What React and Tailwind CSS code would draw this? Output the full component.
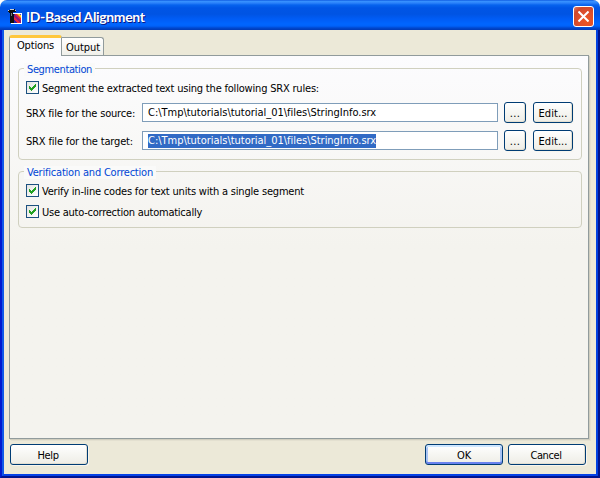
import React from "react";

function Check({ label, spacing, className = "" }) {
  return (
    <label className={`flex h-[13px] items-center ${className}`}>
      <span className="flex size-[13px] shrink-0 items-center justify-center border border-[#1c5180] bg-gradient-to-br from-[#e4e4e0] to-white">
        <svg width="7" height="7" viewBox="0 0 7 7" fill="#21a121" shapeRendering="crispEdges">
          <path d="M0 2h1v1h1v1h1v-1h1v-1h1v-1h1v-1h1v3h-1v1h-1v1h-1v1h-1v1h-1v-1h-1v-1h-1z" />
        </svg>
      </span>
      <span className={`ml-[3px] pt-[2px] whitespace-nowrap ${spacing}`}>{label}</span>
    </label>
  );
}

function Button({ children, className = "", spacing = "", primary = false }) {
  const face = primary
    ? "shadow-[inset_0_2px_0_#cee7ff,inset_0_-2px_0_#6982ee,inset_2px_0_0_#a9c4f3,inset_-2px_0_0_#a9c4f3]"
    : "shadow-[inset_-1px_-1px_0_#e2dfd2,1px_1px_0_#f7f5ee]";
  return (
    <button
      className={`flex h-[21px] items-center justify-center whitespace-nowrap rounded-[3px] border border-[#003c74] bg-gradient-to-b from-white via-[#f6f6f2] to-[#eeede6] pt-[2px] ${face} ${className}`}
    >
      <span className={spacing}>{children}</span>
    </button>
  );
}

function Group({ title, spacing, className = "", children }) {
  return (
    <fieldset className={`relative rounded-[4px] border border-[#d0d0bf] ${className}`}>
      <span className={`absolute -top-[6px] left-[5px] h-[13px] bg-[#fafaf9] px-[3px] leading-[13px] whitespace-nowrap text-[#0046d5] ${spacing}`}>
        {title}
      </span>
      {children}
    </fieldset>
  );
}

function FileRow({ label, spacing, selected = false, className = "" }) {
  return (
    <div className={`flex h-[21px] items-center ${className}`}>
      <span className={`w-[116px] shrink-0 pt-[2px] whitespace-nowrap ${spacing}`}>{label}</span>
      <div className="flex h-[19px] w-[356px] shrink-0 items-center border border-[#7f9db9] bg-white pl-[5px]">
        <span className={`mt-px block h-[14px] leading-[14px] whitespace-nowrap tracking-[-0.022px] ${selected ? "bg-[#316ac5] text-white" : ""}`}>
          {"C:\\Tmp\\tutorials\\tutorial_01\\files\\StringInfo.srx"}
        </span>
      </div>
      <Button className="ml-[6px] w-[22px]" spacing="tracking-[0.3px]">...</Button>
      <Button className="ml-[7px] w-[40px]" spacing="tracking-[0.06px]">Edit...</Button>
    </div>
  );
}

function AppIcon() {
  return (
    <svg width="14" height="16" viewBox="0 0 14 16" shapeRendering="crispEdges">
      <path fill="#fff" d="M3 4h11v11H3z" />
      <path fill="#2a1aa8" d="M5 5h8v9H5z" />
      <path fill="#8d1a7a" d="M6 6h1l6 6v2h-2L6 9z" />
      <path fill="#e5243b" d="M7 5h2l4 4v3L7 6z" />
      <path fill="#ffd21c" d="M9 5h2l2 2v2z" />
      <path fill="#e5243b" d="M6 7l6 7H9L6 11z" />
      <path fill="#f07f22" d="M8 5h1l4 4v1z" />
      <path fill="#4b4be0" d="M11 5h2v2z" />
      <path fill="#101010" d="M2 0h5v1h1v2H5v2h1v9H2V4H1V3H0V1h2z" />
      <path fill="#c9cfd4" d="M2 0h4v1H2zM0 1h1v1H0zM7 1h1v1H7z" />
      <path fill="#7d7d7d" d="M3 4h1v3H3z" />
    </svg>
  );
}

export default function App() {
  return (
    <div className="h-[478px] w-[600px] bg-white font-['DejaVu_Sans_Condensed','DejaVu_Sans',sans-serif] text-[11px] leading-[13px] text-black">
      <div className="flex h-full flex-col overflow-hidden rounded-t-[7px] bg-[#ece9d8]">
        <header className="flex h-[30px] shrink-0 items-center bg-[linear-gradient(to_bottom,#0048d8_0px,#3a94ff_1px,#2b82fa_3px,#0663ee_5px,#0055e5_8px,#0054e3_14px,#005cf5_19px,#0066ff_24px,#0062fa_26px,#0048cf_28px,#0039b5_30px)] pt-[3px] pr-[6px] pl-[8px]">
          <AppIcon />
          <span className="ml-[4px] whitespace-nowrap font-['Lato','Noto_Sans',sans-serif] text-[14px] leading-[16px] font-bold tracking-[-0.35px] text-white [text-shadow:1px_1px_0_#0a1883]">
            ID-Based Alignment
          </span>
          <button className="ml-auto flex size-[21px] items-center justify-center rounded-[3px] border border-white bg-[radial-gradient(circle_at_70%_75%,#ee5520_0%,#df4f2b_45%,#cf482c_75%,#e08068_100%)]">
            <svg width="11" height="11" viewBox="0 0 11 11" stroke="#fff" strokeWidth="2">
              <path d="M0.5 0.5l10 10M10.5 0.5L0.5 10.5" />
            </svg>
          </button>
        </header>

        <div className="grow border-x-2 border-b-2 border-l-[#0019cf] border-r-[#00138c] border-b-[#00138c]">
          <div className="flex h-full flex-col border-x-2 border-b-2 border-l-[#1058e8] border-r-[#0141e0] border-b-[#0441e6] bg-[#ece9d8] px-[5px] pt-[5px]">
            <nav className="relative z-10 flex h-[20px] items-end">
              <div className="mb-[-1px] h-[21px] w-[53px] rounded-t-[3px] border-x border-t-[3px] border-x-[#919b9c] border-t-[#ffc73c] bg-[#fcfcfe] pt-px pl-[7px] whitespace-nowrap tracking-[-0.17px]">
                Options
              </div>
              <div className="h-[18px] w-[42px] rounded-tr-[3px] border-t border-r border-[#919b9c] bg-gradient-to-b from-white to-[#f0f0ea] pt-[3px] pl-[4px] whitespace-nowrap tracking-[-0.06px]">
                Output
              </div>
            </nav>

            <main className="h-[384px] w-[580px] border border-[#919b9c] bg-gradient-to-b from-[#fcfcfe] to-[#f4f3ee] to-50% px-[8px] pt-[12px] shadow-[1px_1px_0_#d0cebf,2px_2px_0_#e3e0d0]">
              <Group title="Segmentation" spacing="tracking-[-0.38px]" className="h-[92px] w-[564px] pt-[12px] pl-[7px]">
                <Check label="Segment the extracted text using the following SRX rules:" spacing="tracking-[-0.192px]" />
                <FileRow label="SRX file for the source:" spacing="tracking-[-0.19px]" className="mt-[8px]" />
                <FileRow label="SRX file for the target:" spacing="tracking-[-0.16px]" className="mt-[7px]" selected />
              </Group>
              <Group title="Verification and Correction" spacing="tracking-[-0.206px]" className="mt-[11px] h-[57px] w-[564px] pt-[12px] pl-[7px]">
                <Check label="Verify in-line codes for text units with a single segment" spacing="tracking-[-0.192px]" />
                <Check label="Use auto-correction automatically" spacing="tracking-[-0.241px]" className="mt-[8px]" />
              </Group>
            </main>

            <footer className="mt-[5px] flex pl-px">
              <Button className="w-[78px] pr-[2px]" spacing="tracking-[-0.35px]">Help</Button>
              <Button className="ml-[337px] w-[78px]" spacing="tracking-[-0.14px]" primary>OK</Button>
              <Button className="ml-[5px] w-[78px] pr-[2px]" spacing="tracking-[-0.4px]">Cancel</Button>
            </footer>
          </div>
        </div>
      </div>
    </div>
  );
}
